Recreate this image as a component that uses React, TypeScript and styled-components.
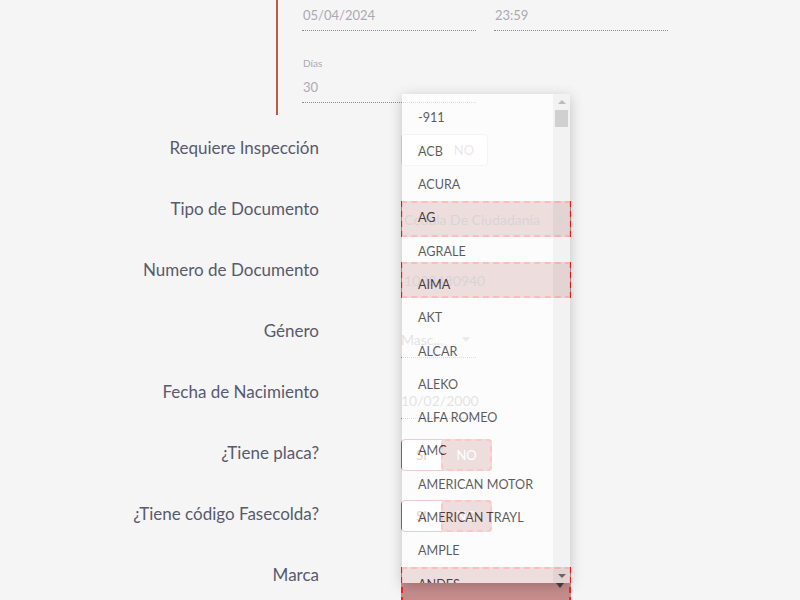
import React from "react";
import styled, { createGlobalStyle } from "styled-components";

const GlobalStyle = createGlobalStyle`
  html, body { margin: 0; padding: 0; background: #f5f5f5; }
  body { font-family: Lato, "Noto Sans", sans-serif; }
`;

const Page = styled.div`
  position: relative;
  width: 800px;
  height: 600px;
  overflow: hidden;
  background: #f5f5f5;
`;

const TopSection = styled.section`
  box-sizing: border-box;
  margin-left: 276px;
  height: 115px;
  border-left: 2px solid #c0584a;
  padding-left: 24px;
  display: grid;
  grid-template-columns: 174px 174px;
  column-gap: 18px;
  align-content: start;
`;

const TopField = styled.div<{ $span?: boolean }>`
  display: flex;
  flex-direction: column;
  grid-column: ${(p) => (p.$span ? "1 / 2" : "auto")};
`;

const SmallLabel = styled.div`
  margin-top: 25px;
  font-size: 10px;
  line-height: 14px;
  color: #a9a9b2;
  padding-left: 1px;
`;

const TopValue = styled.div<{ $pt: number }>`
  padding: ${(p) => p.$pt}px 1px 5px;
  font-size: 13px;
  line-height: 20px;
  color: #aaaab2;
  border-bottom: 1px dotted #8e8e8e;
`;

const Form = styled.div`
  padding-top: 3px;
  display: flex;
  flex-direction: column;
`;

const Row = styled.div`
  display: grid;
  grid-template-columns: 320px 170px;
  column-gap: 81px;
  height: 61px;
`;

const Label = styled.div`
  align-self: center;
  margin-bottom: 2px;
  text-align: right;
  padding-right: 1px;
  font-size: 17px;
  line-height: 22px;
  color: #585a6d;
`;

const Control = styled.div<{ $top: number }>`
  align-self: start;
  margin-top: ${(p) => p.$top}px;
`;

const ErrorBox = styled.div`
  box-sizing: border-box;
  width: 170px;
  height: 36px;
  display: flex;
  align-items: center;
  justify-content: space-between;
  padding: 0 5px 0 1px;
  border: 2px dashed #ff1f1f;
  background: #c78d8d;
  color: #7a7070;
  font-size: 14px;
`;

const LineField = styled.div`
  box-sizing: border-box;
  width: 75px;
  height: 36px;
  display: flex;
  align-items: center;
  justify-content: space-between;
  padding: 0 6px 0 0;
  border-bottom: 1px dotted #8e8e8e;
  color: #a8a0a8;
  font-size: 14px;
`;

const Caret = styled.span<{ $color?: string }>`
  width: 0;
  height: 0;
  border-left: 4px solid transparent;
  border-right: 4px solid transparent;
  border-top: 5px solid ${(p) => p.$color || "#9a9a9a"};
`;

const Toggle = styled.div<{ $w: number; $border: string }>`
  box-sizing: border-box;
  width: ${(p) => p.$w}px;
  height: 32px;
  display: flex;
  border: 1px solid ${(p) => p.$border};
  border-radius: 4px;
  background: #fff;
`;

const ToggleSide = styled.div<{ $active?: boolean; $color: string; $w: number }>`
  box-sizing: border-box;
  width: ${(p) => p.$w}px;
  margin: ${(p) => (p.$active ? "-1px -1px -1px 0" : "0")};
  height: ${(p) => (p.$active ? "32px" : "30px")};
  display: flex;
  align-items: center;
  justify-content: center;
  font-size: 13px;
  color: ${(p) => p.$color};
  background: ${(p) => (p.$active ? "#c78d8d" : "transparent")};
  border: ${(p) => (p.$active ? "2px dashed #ff4040" : "none")};
  border-radius: ${(p) => (p.$active ? "4px" : "0")};
`;

const Dropdown = styled.div`
  position: absolute;
  left: 402px;
  top: 94px;
  width: 168px;
  height: 489px;
  display: flex;
  background: #fff;
  opacity: 0.7;
  box-shadow: 0 3px 12px rgba(0, 0, 0, 0.3);
  overflow: hidden;
`;

const Options = styled.ul`
  flex: 1;
  margin: 0;
  padding: 7.3px 0 0;
  list-style: none;
`;

const Option = styled.li`
  height: 33.3px;
  display: flex;
  align-items: center;
  padding-left: 16px;
  font-size: 12.6px;
  color: #1a1a1a;
  white-space: nowrap;
`;

const ScrollTrack = styled.div`
  width: 17px;
  display: flex;
  flex-direction: column;
  align-items: center;
  background: #f1f1f1;
`;

const ArrowUp = styled.span`
  margin-top: 6px;
  width: 0;
  height: 0;
  border-left: 4px solid transparent;
  border-right: 4px solid transparent;
  border-bottom: 4px solid #a3a3a3;
`;

const ArrowDown = styled.span`
  margin-bottom: 5px;
  width: 0;
  height: 0;
  border-left: 4px solid transparent;
  border-right: 4px solid transparent;
  border-top: 4px solid #505050;
`;

const Thumb = styled.div`
  margin-top: 6px;
  width: 13px;
  height: 17px;
  background: #c1c1c1;
`;

const Spacer = styled.div`
  flex: 1;
`;

const brands = [
  "-911",
  "ACB",
  "ACURA",
  "AG",
  "AGRALE",
  "AIMA",
  "AKT",
  "ALCAR",
  "ALEKO",
  "ALFA ROMEO",
  "AMC",
  "AMERICAN MOTOR",
  "AMERICAN TRAYL",
  "AMPLE",
  "ANDES",
];

export default function App() {
  return (
    <Page>
      <GlobalStyle />
      <TopSection>
        <TopField>
          <TopValue $pt={5}>05/04/2024</TopValue>
        </TopField>
        <TopField>
          <TopValue $pt={5}>23:59</TopValue>
        </TopField>
        <TopField $span>
          <SmallLabel>Días</SmallLabel>
          <TopValue $pt={7}>30</TopValue>
        </TopField>
      </TopSection>

      <Form>
        <Row>
          <Label>Requiere Inspección</Label>
          <Control $top={16}>
            <Toggle $w={87} $border="#dcdcdc">
              <ToggleSide $w={40} $color="#d8d8d8">SI</ToggleSide>
              <ToggleSide $w={47} $color="#c8a4c8">NO</ToggleSide>
            </Toggle>
          </Control>
        </Row>
        <Row>
          <Label>Tipo de Documento</Label>
          <Control $top={22}>
            <ErrorBox>
              <span>Cedula De Ciudadania</span>
              <Caret />
            </ErrorBox>
          </Control>
        </Row>
        <Row>
          <Label>Numero de Documento</Label>
          <Control $top={22}>
            <ErrorBox>
              <span>1028480940</span>
            </ErrorBox>
          </Control>
        </Row>
        <Row>
          <Label>Género</Label>
          <Control $top={21}>
            <LineField>
              <span>Masc...</span>
              <Caret $color="#c0b8c0" />
            </LineField>
          </Control>
        </Row>
        <Row>
          <Label>Fecha de Nacimiento</Label>
          <Control $top={21}>
            <LineField>
              <span>10/02/2000</span>
            </LineField>
          </Control>
        </Row>
        <Row>
          <Label>¿Tiene placa?</Label>
          <Control $top={16}>
            <Toggle $w={91} $border="#c0584a">
              <ToggleSide $w={40} $color="#c0584a">SI</ToggleSide>
              <ToggleSide $w={52} $active $color="#ffffff">NO</ToggleSide>
            </Toggle>
          </Control>
        </Row>
        <Row>
          <Label>¿Tiene código Fasecolda?</Label>
          <Control $top={16}>
            <Toggle $w={91} $border="#c0584a">
              <ToggleSide $w={40} $color="#c0584a">SI</ToggleSide>
              <ToggleSide $w={52} $active $color="#ffffff">NO</ToggleSide>
            </Toggle>
          </Control>
        </Row>
        <Row>
          <Label>Marca</Label>
          <Control $top={22}>
            <ErrorBox>
              <span />
              <Caret $color="#444" />
            </ErrorBox>
          </Control>
        </Row>
      </Form>

      <Dropdown>
        <Options>
          {brands.map((b) => (
            <Option key={b}>{b}</Option>
          ))}
        </Options>
        <ScrollTrack>
          <ArrowUp />
          <Thumb />
          <Spacer />
          <ArrowDown />
        </ScrollTrack>
      </Dropdown>
    </Page>
  );
}
